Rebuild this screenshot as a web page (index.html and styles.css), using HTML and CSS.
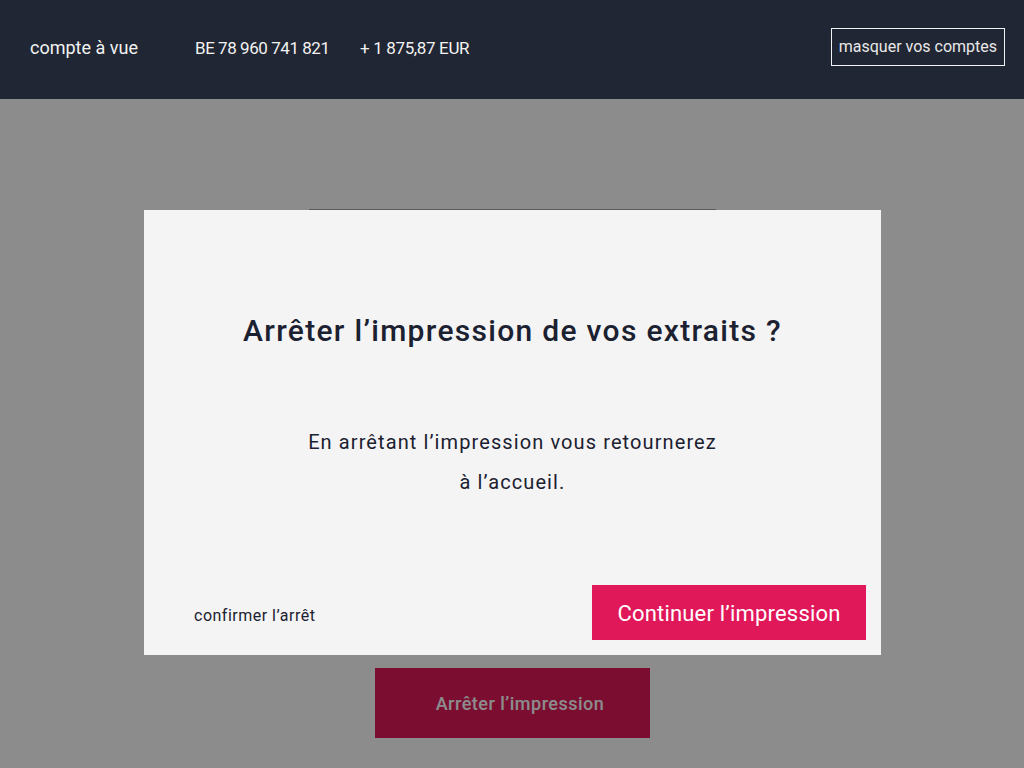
FILE: index.html
```html
<!DOCTYPE html>
<html lang="fr">
<head>
<meta charset="utf-8">
<title>Arrêter l'impression</title>
<link rel="stylesheet" href="styles.css">
</head>
<body>
<header class="topbar">
  <div class="account">
    <span class="acc-name">compte à vue</span>
    <span class="acc-iban">BE 78 960 741 821</span>
    <span class="acc-balance">+ 1 875,87 EUR</span>
  </div>
  <button class="hide-btn">masquer vos comptes</button>
</header>
<main class="page">
  <div class="progress"></div>
  <button class="stop-btn">Arrêter l’impression</button>
</main>
<div class="overlay"></div>
<div class="modal" role="dialog">
  <h1 class="modal-title">Arrêter l’impression de vos extraits ?</h1>
  <p class="modal-text">En arrêtant l’impression vous retournerez<br>à l’accueil.</p>
  <div class="modal-actions">
    <button class="link-btn">confirmer l’arrêt</button>
    <button class="primary-btn">Continuer l’impression</button>
  </div>
</div>
</body>
</html>
```
FILE: styles.css
```css
* { box-sizing: border-box; }
html, body { margin: 0; padding: 0; }
body {
  width: 1024px;
  height: 768px;
  overflow: hidden;
  background: #ffffff;
  font-family: Roboto, "Liberation Sans", sans-serif;
  position: relative;
}
button { font-family: inherit; cursor: pointer; }

.topbar {
  height: 99px;
  background: #202633;
  color: #f2f2f2;
  display: flex;
  align-items: center;
  justify-content: space-between;
  padding: 0 19px 0 30px;
}
.account {
  display: flex;
  align-items: center;
  font-size: 17px;
  margin-top: -4px;
}
.acc-name { font-size: 18px; width: 165px; }
.acc-iban { width: 165px; letter-spacing: -0.45px; }
.acc-balance { letter-spacing: -0.35px; }
.hide-btn {
  background: transparent;
  border: 1px solid #f2f2f2;
  color: #e8e8e8;
  font-size: 16px;
  height: 38px;
  padding: 0 7px;
  margin-top: -6px;
  margin-left: -1px;
}

.page {
  display: flex;
  flex-direction: column;
  align-items: center;
  padding-top: 110px;
}
.progress {
  width: 407px;
  height: 1px;
  background: #a5a5a5;
}
.stop-btn {
  margin-top: 458px;
  width: 275px;
  height: 70px;
  background: #e0185a;
  color: #ffffff;
  border: none;
  font-size: 18px;
  font-weight: 500;
  letter-spacing: 0.5px;
  padding: 0 0 0 16px;
}

.overlay {
  position: absolute;
  left: 0;
  right: 0;
  top: 99px;
  bottom: 0;
  background: rgba(0, 0, 0, 0.45);
}

.modal {
  position: absolute;
  left: 144px;
  top: 210px;
  width: 737px;
  height: 445px;
  background: #f4f4f4;
  display: flex;
  flex-direction: column;
  align-items: center;
  color: #1b2130;
}
.modal-title {
  margin: 99px 0 0;
  font-size: 30px;
  font-weight: 500;
  letter-spacing: 1.3px;
  line-height: 44px;
}
.modal-text {
  margin: 69px 0 0;
  font-size: 20px;
  line-height: 40px;
  letter-spacing: 1.1px;
  text-align: center;
}
.modal-actions {
  margin-top: auto;
  width: 100%;
  display: flex;
  align-items: center;
  justify-content: space-between;
  padding: 0 15px 15px 50px;
}
.link-btn {
  background: none;
  border: none;
  padding: 0;
  font-size: 16px;
  letter-spacing: 0.5px;
  color: #1b2130;
  margin-top: 6px;
}
.primary-btn {
  width: 274px;
  height: 55px;
  background: #e0185a;
  color: #ffffff;
  border: none;
  font-size: 22px;
  letter-spacing: 0.2px;
  padding-top: 2px;
}
```
